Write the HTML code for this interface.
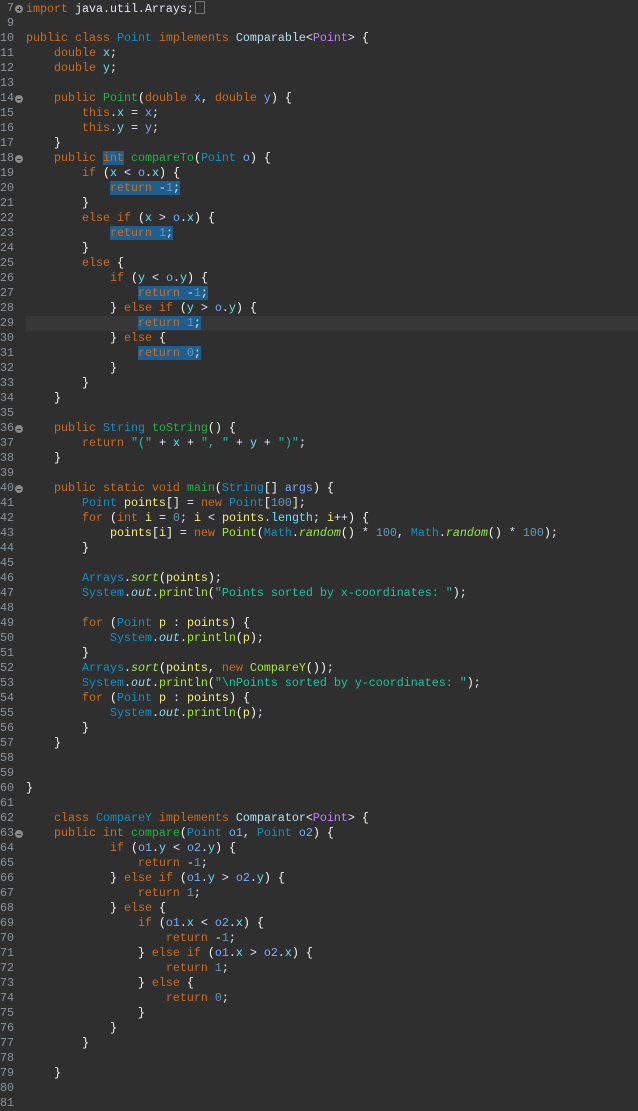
<!DOCTYPE html>
<html><head><meta charset="utf-8"><style>
html,body{margin:0;padding:0;background:#2f2f2f;width:638px;height:1110px;overflow:hidden}
#ed{position:absolute;top:1px;left:0;width:638px;font-family:"Liberation Mono",monospace;font-size:11.67px;color:#e6e6fa}
.r{position:relative;height:15px;line-height:15px;white-space:pre}
.ln{position:absolute;left:0;width:14px;text-align:right;color:#8a949c}
.fd{position:absolute;left:15px;top:4px;width:8px;height:8px;border-radius:50%;background:#8a8a8a}
.fd:after{content:"";position:absolute;left:2px;top:3.5px;width:4px;height:1px;background:#2f2f2f}
.fp:before{content:"";position:absolute;left:3.5px;top:2px;width:1px;height:4px;background:#2f2f2f}
.t{position:absolute;left:26px}
.cur{background:#373737;position:absolute;left:26px;right:0;top:0;bottom:0}
.k{color:#cc6c1d}.c{color:#1290c3}.f{color:#66e1f8}.p{color:#79abff}.m{color:#1eb540}.mc{color:#a7ec21}
.l{color:#f3ec79}.s{color:#17c6a3}.n{color:#6897bb}.sf{color:#8ddaf8;font-style:italic}.sm{color:#96ec3f;font-style:italic}
.i{color:#b1e0ec}.tp{color:#bf7fff}.b{color:#f9faf4}
.h{background:#1f5f90}
.box{display:inline-block;width:8px;height:11px;border:1px solid #777;vertical-align:-2px;margin-left:1px}
</style></head><body><div id="ed">
<div class="r"><span class="ln">7</span><span class="fd fp"></span><span class="t"><span class="k">import</span> java.util.Arrays;<span class="box"></span></span></div>
<div class="r"><span class="ln">9</span></div>
<div class="r"><span class="ln">10</span><span class="t"><span class="k">public class</span> <span class="c">Point</span> <span class="k">implements</span> <span class="i">Comparable</span>&lt;<span class="tp">Point</span>&gt; <span class="b">{</span></span></div>
<div class="r"><span class="ln">11</span><span class="t">    <span class="k">double</span> <span class="f">x</span>;</span></div>
<div class="r"><span class="ln">12</span><span class="t">    <span class="k">double</span> <span class="f">y</span>;</span></div>
<div class="r"><span class="ln">13</span></div>
<div class="r"><span class="ln">14</span><span class="fd"></span><span class="t">    <span class="k">public</span> <span class="m">Point</span><span class="b">(</span><span class="k">double</span> <span class="p">x</span>, <span class="k">double</span> <span class="p">y</span><span class="b">)</span> <span class="b">{</span></span></div>
<div class="r"><span class="ln">15</span><span class="t">        <span class="k">this</span>.<span class="f">x</span> = <span class="p">x</span>;</span></div>
<div class="r"><span class="ln">16</span><span class="t">        <span class="k">this</span>.<span class="f">y</span> = <span class="p">y</span>;</span></div>
<div class="r"><span class="ln">17</span><span class="t">    <span class="b">}</span></span></div>
<div class="r"><span class="ln">18</span><span class="fd"></span><span class="t">    <span class="k">public</span> <span class="k h">int</span> <span class="m">compareTo</span><span class="b">(</span><span class="c">Point</span> <span class="p">o</span><span class="b">)</span> <span class="b">{</span></span></div>
<div class="r"><span class="ln">19</span><span class="t">        <span class="k">if</span> <span class="b">(</span><span class="f">x</span> &lt; <span class="p">o</span>.<span class="f">x</span><span class="b">)</span> <span class="b">{</span></span></div>
<div class="r"><span class="ln">20</span><span class="t">            <span class="h"><span class="k">return</span> -<span class="n">1</span>;</span></span></div>
<div class="r"><span class="ln">21</span><span class="t">        <span class="b">}</span></span></div>
<div class="r"><span class="ln">22</span><span class="t">        <span class="k">else if</span> <span class="b">(</span><span class="f">x</span> &gt; <span class="p">o</span>.<span class="f">x</span><span class="b">)</span> <span class="b">{</span></span></div>
<div class="r"><span class="ln">23</span><span class="t">            <span class="h"><span class="k">return</span> <span class="n">1</span>;</span></span></div>
<div class="r"><span class="ln">24</span><span class="t">        <span class="b">}</span></span></div>
<div class="r"><span class="ln">25</span><span class="t">        <span class="k">else</span> <span class="b">{</span></span></div>
<div class="r"><span class="ln">26</span><span class="t">            <span class="k">if</span> <span class="b">(</span><span class="f">y</span> &lt; <span class="p">o</span>.<span class="f">y</span><span class="b">)</span> <span class="b">{</span></span></div>
<div class="r"><span class="ln">27</span><span class="t">                <span class="h"><span class="k">return</span> -<span class="n">1</span>;</span></span></div>
<div class="r"><span class="ln">28</span><span class="t">            <span class="b">}</span> <span class="k">else if</span> <span class="b">(</span><span class="f">y</span> &gt; <span class="p">o</span>.<span class="f">y</span><span class="b">)</span> <span class="b">{</span></span></div>
<div class="r"><span class="cur"></span><span class="ln">29</span><span class="t">                <span class="h"><span class="k">return</span> <span class="n">1</span>;</span></span></div>
<div class="r"><span class="ln">30</span><span class="t">            <span class="b">}</span> <span class="k">else</span> <span class="b">{</span></span></div>
<div class="r"><span class="ln">31</span><span class="t">                <span class="h"><span class="k">return</span> <span class="n">0</span>;</span></span></div>
<div class="r"><span class="ln">32</span><span class="t">            <span class="b">}</span></span></div>
<div class="r"><span class="ln">33</span><span class="t">        <span class="b">}</span></span></div>
<div class="r"><span class="ln">34</span><span class="t">    <span class="b">}</span></span></div>
<div class="r"><span class="ln">35</span></div>
<div class="r"><span class="ln">36</span><span class="fd"></span><span class="t">    <span class="k">public</span> <span class="c">String</span> <span class="m">toString</span><span class="b">()</span> <span class="b">{</span></span></div>
<div class="r"><span class="ln">37</span><span class="t">        <span class="k">return</span> <span class="s">"("</span> + <span class="f">x</span> + <span class="s">", "</span> + <span class="f">y</span> + <span class="s">")"</span>;</span></div>
<div class="r"><span class="ln">38</span><span class="t">    <span class="b">}</span></span></div>
<div class="r"><span class="ln">39</span></div>
<div class="r"><span class="ln">40</span><span class="fd"></span><span class="t">    <span class="k">public static void</span> <span class="m">main</span><span class="b">(</span><span class="c">String</span><span class="b">[]</span> <span class="p">args</span><span class="b">)</span> <span class="b">{</span></span></div>
<div class="r"><span class="ln">41</span><span class="t">        <span class="c">Point</span> <span class="l">points</span><span class="b">[]</span> = <span class="k">new</span> <span class="c">Point</span><span class="b">[</span><span class="n">100</span><span class="b">]</span>;</span></div>
<div class="r"><span class="ln">42</span><span class="t">        <span class="k">for</span> <span class="b">(</span><span class="k">int</span> <span class="l">i</span> = <span class="n">0</span>; <span class="l">i</span> &lt; <span class="l">points</span>.<span class="f">length</span>; <span class="l">i</span>++<span class="b">)</span> <span class="b">{</span></span></div>
<div class="r"><span class="ln">43</span><span class="t">            <span class="l">points</span><span class="b">[</span><span class="l">i</span><span class="b">]</span> = <span class="k">new</span> <span class="mc">Point</span><span class="b">(</span><span class="c">Math</span>.<span class="sm">random</span><span class="b">()</span> * <span class="n">100</span>, <span class="c">Math</span>.<span class="sm">random</span><span class="b">()</span> * <span class="n">100</span><span class="b">)</span>;</span></div>
<div class="r"><span class="ln">44</span><span class="t">        <span class="b">}</span></span></div>
<div class="r"><span class="ln">45</span></div>
<div class="r"><span class="ln">46</span><span class="t">        <span class="c">Arrays</span>.<span class="sm">sort</span><span class="b">(</span><span class="l">points</span><span class="b">)</span>;</span></div>
<div class="r"><span class="ln">47</span><span class="t">        <span class="c">System</span>.<span class="sf">out</span>.<span class="mc">println</span><span class="b">(</span><span class="s">"Points sorted by x-coordinates: "</span><span class="b">)</span>;</span></div>
<div class="r"><span class="ln">48</span></div>
<div class="r"><span class="ln">49</span><span class="t">        <span class="k">for</span> <span class="b">(</span><span class="c">Point</span> <span class="l">p</span> : <span class="l">points</span><span class="b">)</span> <span class="b">{</span></span></div>
<div class="r"><span class="ln">50</span><span class="t">            <span class="c">System</span>.<span class="sf">out</span>.<span class="mc">println</span><span class="b">(</span><span class="l">p</span><span class="b">)</span>;</span></div>
<div class="r"><span class="ln">51</span><span class="t">        <span class="b">}</span></span></div>
<div class="r"><span class="ln">52</span><span class="t">        <span class="c">Arrays</span>.<span class="sm">sort</span><span class="b">(</span><span class="l">points</span>, <span class="k">new</span> <span class="mc">CompareY</span><span class="b">())</span>;</span></div>
<div class="r"><span class="ln">53</span><span class="t">        <span class="c">System</span>.<span class="sf">out</span>.<span class="mc">println</span><span class="b">(</span><span class="s">"\nPoints sorted by y-coordinates: "</span><span class="b">)</span>;</span></div>
<div class="r"><span class="ln">54</span><span class="t">        <span class="k">for</span> <span class="b">(</span><span class="c">Point</span> <span class="l">p</span> : <span class="l">points</span><span class="b">)</span> <span class="b">{</span></span></div>
<div class="r"><span class="ln">55</span><span class="t">            <span class="c">System</span>.<span class="sf">out</span>.<span class="mc">println</span><span class="b">(</span><span class="l">p</span><span class="b">)</span>;</span></div>
<div class="r"><span class="ln">56</span><span class="t">        <span class="b">}</span></span></div>
<div class="r"><span class="ln">57</span><span class="t">    <span class="b">}</span></span></div>
<div class="r"><span class="ln">58</span></div>
<div class="r"><span class="ln">59</span></div>
<div class="r"><span class="ln">60</span><span class="t"><span class="b">}</span></span></div>
<div class="r"><span class="ln">61</span></div>
<div class="r"><span class="ln">62</span><span class="t">    <span class="k">class</span> <span class="c">CompareY</span> <span class="k">implements</span> <span class="i">Comparator</span>&lt;<span class="tp">Point</span>&gt; <span class="b">{</span></span></div>
<div class="r"><span class="ln">63</span><span class="fd"></span><span class="t">    <span class="k">public int</span> <span class="m">compare</span><span class="b">(</span><span class="c">Point</span> <span class="p">o1</span>, <span class="c">Point</span> <span class="p">o2</span><span class="b">)</span> <span class="b">{</span></span></div>
<div class="r"><span class="ln">64</span><span class="t">            <span class="k">if</span> <span class="b">(</span><span class="p">o1</span>.<span class="f">y</span> &lt; <span class="p">o2</span>.<span class="f">y</span><span class="b">)</span> <span class="b">{</span></span></div>
<div class="r"><span class="ln">65</span><span class="t">                <span class="k">return</span> -<span class="n">1</span>;</span></div>
<div class="r"><span class="ln">66</span><span class="t">            <span class="b">}</span> <span class="k">else if</span> <span class="b">(</span><span class="p">o1</span>.<span class="f">y</span> &gt; <span class="p">o2</span>.<span class="f">y</span><span class="b">)</span> <span class="b">{</span></span></div>
<div class="r"><span class="ln">67</span><span class="t">                <span class="k">return</span> <span class="n">1</span>;</span></div>
<div class="r"><span class="ln">68</span><span class="t">            <span class="b">}</span> <span class="k">else</span> <span class="b">{</span></span></div>
<div class="r"><span class="ln">69</span><span class="t">                <span class="k">if</span> <span class="b">(</span><span class="p">o1</span>.<span class="f">x</span> &lt; <span class="p">o2</span>.<span class="f">x</span><span class="b">)</span> <span class="b">{</span></span></div>
<div class="r"><span class="ln">70</span><span class="t">                    <span class="k">return</span> -<span class="n">1</span>;</span></div>
<div class="r"><span class="ln">71</span><span class="t">                <span class="b">}</span> <span class="k">else if</span> <span class="b">(</span><span class="p">o1</span>.<span class="f">x</span> &gt; <span class="p">o2</span>.<span class="f">x</span><span class="b">)</span> <span class="b">{</span></span></div>
<div class="r"><span class="ln">72</span><span class="t">                    <span class="k">return</span> <span class="n">1</span>;</span></div>
<div class="r"><span class="ln">73</span><span class="t">                <span class="b">}</span> <span class="k">else</span> <span class="b">{</span></span></div>
<div class="r"><span class="ln">74</span><span class="t">                    <span class="k">return</span> <span class="n">0</span>;</span></div>
<div class="r"><span class="ln">75</span><span class="t">                <span class="b">}</span></span></div>
<div class="r"><span class="ln">76</span><span class="t">            <span class="b">}</span></span></div>
<div class="r"><span class="ln">77</span><span class="t">        <span class="b">}</span></span></div>
<div class="r"><span class="ln">78</span></div>
<div class="r"><span class="ln">79</span><span class="t">    <span class="b">}</span></span></div>
<div class="r"><span class="ln">80</span></div>
<div class="r"><span class="ln">81</span></div>
</div></body></html>
